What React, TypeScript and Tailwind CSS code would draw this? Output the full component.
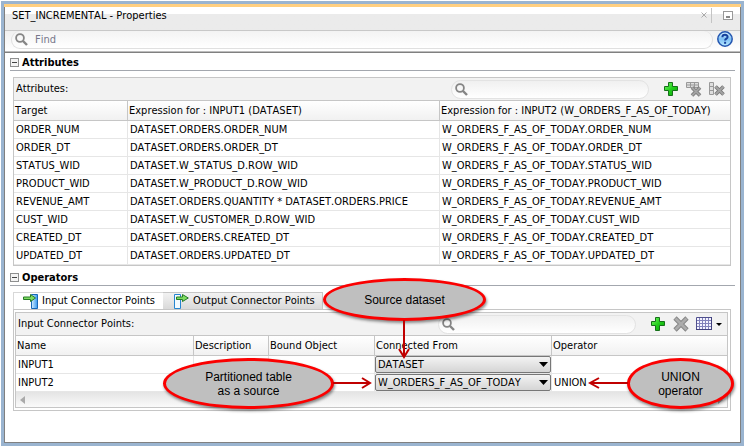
import type { ReactNode } from "react";

const attributes = [
  ["ORDER_NUM", "DATASET.ORDERS.ORDER_NUM", "W_ORDERS_F_AS_OF_TODAY.ORDER_NUM"],
  ["ORDER_DT", "DATASET.ORDERS.ORDER_DT", "W_ORDERS_F_AS_OF_TODAY.ORDER_DT"],
  ["STATUS_WID", "DATASET.W_STATUS_D.ROW_WID", "W_ORDERS_F_AS_OF_TODAY.STATUS_WID"],
  ["PRODUCT_WID", "DATASET.W_PRODUCT_D.ROW_WID", "W_ORDERS_F_AS_OF_TODAY.PRODUCT_WID"],
  ["REVENUE_AMT", "DATASET.ORDERS.QUANTITY * DATASET.ORDERS.PRICE", "W_ORDERS_F_AS_OF_TODAY.REVENUE_AMT"],
  ["CUST_WID", "DATASET.W_CUSTOMER_D.ROW_WID", "W_ORDERS_F_AS_OF_TODAY.CUST_WID"],
  ["CREATED_DT", "DATASET.ORDERS.CREATED_DT", "W_ORDERS_F_AS_OF_TODAY.CREATED_DT"],
  ["UPDATED_DT", "DATASET.ORDERS.UPDATED_DT", "W_ORDERS_F_AS_OF_TODAY.UPDATED_DT"],
];

const operators = [
  { name: "INPUT1", from: "DATASET", operator: "" },
  { name: "INPUT2", from: "W_ORDERS_F_AS_OF_TODAY", operator: "UNION" },
];

function SearchIcon() {
  return (
    <svg width="13" height="13" viewBox="0 0 13 13" fill="none" stroke="#858585" className="shrink-0">
      <circle cx="5" cy="5" r="3.9" strokeWidth="1.8" />
      <path d="M8 8l4 4" strokeWidth="2.4" />
    </svg>
  );
}

function PlusIcon() {
  return (
    <svg width="16" height="16" viewBox="0 0 16 16">
      <defs>
        <linearGradient id="plus" x1="0" y1="0" x2="1" y2="1">
          <stop offset="0" stopColor="#7dfa6c" />
          <stop offset="0.5" stopColor="#22cf1b" />
          <stop offset="1" stopColor="#0aa00a" />
        </linearGradient>
      </defs>
      <path d="M5.5 1.500h4v4h5v4h-5v5h-4v-5h-4v-4h4z" fill="url(#plus)" stroke="#16701a" strokeLinejoin="round" />
    </svg>
  );
}

function Cross({ d }: { d: string }) {
  return (
    <>
      <path d={d} stroke="#777" strokeWidth="3.6" />
      <path d={d} stroke="#a3a3a3" strokeWidth="1.8" />
    </>
  );
}

function DeleteColumnIcon() {
  return (
    <svg width="16" height="16" viewBox="0 0 16 16" fill="none">
      <path d="M.5 1.5h12v5H.5zM.5 4h12M4.5 1.500v5M8.500 1.500v5" fill="#dedede" stroke="#999" />
      <Cross d="M6 6.500l8 8M14 6.500l-8 8" />
    </svg>
  );
}

function DeleteRowIcon() {
  return (
    <svg width="16" height="16" viewBox="0 0 16 16" fill="none">
      <path d="M.5 1.500h4v12h-4zM.5 5.500h4M.5 9.500h4" fill="#dedede" stroke="#999" />
      <Cross d="M6.500 5.500l8 8M14.500 5.500l-8 8" />
    </svg>
  );
}

function DeleteIcon() {
  return (
    <svg width="16" height="16" viewBox="0 0 16 16" fill="none">
      <path d="M2 2l12 12M14 2L2 14" stroke="#858585" strokeWidth="4.6" />
      <path d="M2.5 2.5l11 11M13.5 2.5l-11 11" stroke="#acacac" strokeWidth="2.8" />
    </svg>
  );
}

function GridIcon() {
  return (
    <svg width="16" height="14" viewBox="0 0 16 14" fill="none">
      <path d="M.5.5h15v12H.5z" fill="#f4f4ff" stroke="#50508e" />
      <path d="M1 3.5h14M1 6.5h14M1 9.5h14M3.5 1v11M6.5 1v11M9.5 1v11M12.5 1v11" stroke="#8282bb" />
      <path d="M0 12.5h16M15.5 0v13" stroke="#40407c" />
    </svg>
  );
}

function ConnectorIcon({ output = false }: { output?: boolean }) {
  return (
    <svg width="16" height="16" viewBox="0 0 16 16" className="shrink-0">
      <defs>
        <linearGradient id="port" x1="0" x2="1">
          <stop offset="0" stopColor="#d5efff" />
          <stop offset="1" stopColor="#3597ee" />
        </linearGradient>
      </defs>
      {output ? (
        <path d="M1.5 1.5h6v14h-6z" fill="#f3faff" stroke="#2585d0" />
      ) : (
        <path d="M8.500 1.500h6v14h-6z" fill="url(#port)" stroke="#1769b8" />
      )}
      <path
        d={output ? "M3.5 4h6V1.500L15.300 5 9.500 8.500V6.500h-6z" : "M.5 4h7V1.500l5 3.500-5 3.500V6.500h-7z"}
        fill="#7fdc60"
        stroke="#267a26"
        strokeLinejoin="round"
      />
    </svg>
  );
}

function HelpIcon() {
  return (
    <svg width="16" height="16" viewBox="0 0 16 16">
      <defs>
        <linearGradient id="help" x1="0" y1="0" x2="0" y2="1">
          <stop offset="0" stopColor="#e0f4ff" />
          <stop offset="0.5" stopColor="#7fc0f5" />
          <stop offset="1" stopColor="#b9eaff" />
        </linearGradient>
      </defs>
      <circle cx="8" cy="8" r="7.2" fill="url(#help)" stroke="#2456b0" strokeWidth="1.5" />
      <path d="M5.4 6.200c0-3.200 5.200-3 5.200-.3 0 1.700-2.500 1.800-2.500 3.600" fill="none" stroke="#16409c" strokeWidth="2" />
      <path d="M7.100 10.800h2v2h-2z" fill="#16409c" />
    </svg>
  );
}

function SearchBox({ label }: { label: string }) {
  return (
    <label className="flex h-[19px] w-[198px] items-center rounded-full border border-[#e3e3e3] bg-gradient-to-b from-[#f0f0f0] to-white pl-[3px]">
      <SearchIcon />
      <input aria-label={label} className="min-w-0 flex-1 bg-transparent px-2 outline-none" />
    </label>
  );
}

function SectionTitle({ children }: { children: ReactNode }) {
  return (
    <h2 className="flex h-4 items-center gap-[3px] border-b border-[#a3a7ae] text-[11px] font-bold">
      <button aria-label="Collapse section" className="flex h-[9px] w-[9px] items-center justify-center border border-[#8e8f8f] bg-[#f4f4f4]">
        <span className="h-px w-[5px] bg-[#444]" />
      </button>
      {children}
    </h2>
  );
}

function HeaderCell({ children, width = "" }: { children: ReactNode; width?: string }) {
  return (
    <th className={`${width} h-5 whitespace-nowrap border-b border-l border-[#c6c6c6] bg-gradient-to-b from-white to-[#f1f1f1] p-0 pl-px text-left font-normal first:border-l-0`}>
      {children}
    </th>
  );
}

function Callout({ className, children }: { className: string; children: ReactNode }) {
  return (
    <div
      className={`${className} absolute flex items-center justify-center rounded-[50%] border-[3px] border-[#fb0000] bg-[#bfbfbf] text-center font-['Liberation_Sans',Arial,sans-serif] text-[12px] leading-[14px] shadow-[1px_2px_3px_rgba(0,0,0,0.45)]`}
    >
      {children}
    </div>
  );
}

function Arrow({ className, width, height, d }: { className: string; width: number; height: number; d: string }) {
  return (
    <svg className={`${className} absolute`} width={width} height={height} fill="none" stroke="#c00000" strokeWidth="2">
      <path d={d} />
    </svg>
  );
}

export default function App() {
  return (
    <div className="relative border-l border-t border-white font-['DejaVu_Sans_Condensed','DejaVu_Sans',sans-serif] text-[11px] leading-[14px] text-black [font-kerning:none]">
      <div className="border-[3px] border-[#9ab4d0]">
        <div className="h-[3px] bg-[#ffcf80]" />
        <div className="border-b border-l border-r border-[#808080] bg-white">
          <header className="bg-gradient-to-b from-white from-[7px] to-[#ebebeb] to-[7px]">
            <div className="flex h-6 items-center border-b border-[#c8c8c8] pl-[7px] pr-[7px] pb-[7px]">
              <h1 className="flex-1 pt-px">SET_INCREMENTAL - Properties</h1>
              <button aria-label="Close" className="px-1">
                <svg width="6" height="6" viewBox="0 0 6 6" stroke="#aaa"><path d="M.5.5l5 5M5.5.5l-5 5" /></svg>
              </button>
              <span className="h-[15px] w-px bg-[#c4c4c4]" />
              <button aria-label="Minimize" className="ml-[11px] flex h-[9px] w-[10px] items-end justify-center border border-[#999] bg-white pb-px">
                <span className="h-[2px] w-1 bg-[#888]" />
              </button>
            </div>
            <div className="flex h-[21px] items-start justify-between border-b border-[#bdbdbd] bg-gradient-to-b from-[#f0f0f0] to-white pl-[6px] pr-[7px]">
              <label className="flex h-[18px] flex-1 items-center rounded-full border border-t-0 border-[#e0e0e0] bg-gradient-to-b from-[#f3f3f3] to-white pl-[3px]">
                <SearchIcon />
                <input aria-label="Find" placeholder="Find" className="min-w-0 flex-1 bg-transparent px-[7px] outline-none placeholder:text-[#77778a]" />
              </label>
              <button aria-label="Help" className="ml-1"><HelpIcon /></button>
            </div>
            <div className="h-px bg-[#808080]" />
          </header>

          <main className="px-[5px] pb-[31px] pt-[2px]">
            <SectionTitle>Attributes</SectionTitle>
            <section className="ml-[3px] mr-1 mt-[6px] border border-[#c6c6c6]">
              <div className="flex h-[22px] items-center bg-[#f2f2f2] pl-[2px] pr-[5px]">
                <span className="flex-1">Attributes:</span>
                <SearchBox label="Search attributes" />
                <div className="ml-[14px] flex gap-[7px]">
                  <button aria-label="Add attribute"><PlusIcon /></button>
                  <button aria-label="Delete column"><DeleteColumnIcon /></button>
                  <button aria-label="Delete row"><DeleteRowIcon /></button>
                </div>
              </div>
              <table className="w-full table-fixed border-separate border-spacing-0 border-t border-[#c6c6c6]">
                <thead>
                  <tr>
                    <HeaderCell width="w-[113px]">Target</HeaderCell>
                    <HeaderCell width="w-[312px]">Expression for : INPUT1 (DATASET)</HeaderCell>
                    <HeaderCell>Expression for : INPUT2 (W_ORDERS_F_AS_OF_TODAY)</HeaderCell>
                  </tr>
                </thead>
                <tbody>
                  {attributes.map((row) => (
                    <tr key={row[0]}>
                      {row.map((cell) => (
                        <td key={cell} className="h-[18px] whitespace-nowrap border-b border-l border-[#e6e6e6] p-0 pl-[2px] first:border-l-0">{cell}</td>
                      ))}
                    </tr>
                  ))}
                </tbody>
              </table>
            </section>

            <div className="mt-1">
              <SectionTitle>Operators</SectionTitle>
            </div>
            <section className="ml-[3px] mr-1 mt-[6px]">
              <div role="tablist" className="flex h-[17px]">
                <button role="tab" aria-selected="true" className="flex w-[150px] items-center gap-[3px] whitespace-nowrap border-l border-t border-[#d8d8d8] bg-white pl-[9px]">
                  <ConnectorIcon />Input Connector Points
                </button>
                <button role="tab" aria-selected="false" className="flex w-[160px] items-center gap-1 whitespace-nowrap border-r border-t border-[#c6c6c6] bg-gradient-to-b from-[#f2f2f2] to-[#d9d9d9] pl-[10px]">
                  <ConnectorIcon output />Output Connector Points
                </button>
              </div>
              <div className="border border-[#c6c6c6] pb-[2px] pl-px pr-[2px] pt-[2px]">
                <div className="border border-[#c6c6c6]">
                  <div className="flex h-[22px] items-center bg-[#f2f2f2] pl-[2px] pr-[5px]">
                    <span className="flex-1">Input Connector Points:</span>
                    <SearchBox label="Search connector points" />
                    <div className="ml-[14px] flex items-center gap-[7px]">
                      <button aria-label="Add connector point"><PlusIcon /></button>
                      <button aria-label="Delete connector point"><DeleteIcon /></button>
                      <button aria-label="Choose columns" className="flex items-center gap-1">
                        <GridIcon />
                        <svg width="6" height="3"><path d="M0 0h6L3 3z" /></svg>
                      </button>
                    </div>
                  </div>
                  <table className="w-full table-fixed border-separate border-spacing-0 border-t border-[#c6c6c6]">
                    <thead>
                      <tr>
                        <HeaderCell width="w-[177px]">Name</HeaderCell>
                        <HeaderCell width="w-[75px]">Description</HeaderCell>
                        <HeaderCell width="w-[106px]">Bound Object</HeaderCell>
                        <HeaderCell width="w-[177px]">Connected From</HeaderCell>
                        <HeaderCell>Operator</HeaderCell>
                      </tr>
                    </thead>
                    <tbody>
                      {operators.map((row) => (
                        <tr key={row.name} className="[&>td]:h-[18px] [&>td]:border-b [&>td]:border-[#e6e6e6] [&>td]:p-0">
                          <td><span className="pl-[2px]">{row.name}</span></td>
                          <td className="border-l" />
                          <td className="border-l" />
                          <td className="border-l">
                            <div className="relative h-[17px]">
                              <select aria-label={`${row.name} connected from`} className="block h-full w-full appearance-none rounded-[2px] border border-[#777] bg-gradient-to-b from-[#f3f3f3] to-[#d5d5d5] pl-[2px] pr-4">
                                <option>{row.from}</option>
                              </select>
                              <svg className="pointer-events-none absolute right-[3px] top-[6px]" width="9" height="5"><path d="M0 0h9L4.500 5z" /></svg>
                            </div>
                          </td>
                          <td className="border-l"><span className="pl-[2px]">{row.operator}</span></td>
                        </tr>
                      ))}
                    </tbody>
                  </table>
                  <div className="flex h-[15px] items-center justify-between bg-gradient-to-b from-[#e4e4e4] to-[#fafafa] px-1">
                    <svg width="5" height="8" fill="#aaa"><path d="M5 0v8L0 4z" /></svg>
                    <svg width="5" height="8" fill="#aaa"><path d="M0 0v8l5-4z" /></svg>
                  </div>
                </div>
              </div>
            </section>
          </main>
        </div>
      </div>

      <Callout className="left-[322px] top-[277px] h-[43px] w-[163px]">Source dataset</Callout>
      <Callout className="left-[162px] top-[357px] h-[51px] w-[171px]">Partitioned table<br />as a source</Callout>
      <Callout className="left-[626px] top-[357px] h-[51px] w-[107px]">UNION<br />operator</Callout>
      <Arrow className="left-[397px] top-[319px]" width={12} height={40} d="M6 0v37M1 29l5 8 5-8" />
      <Arrow className="left-[332px] top-[376px]" width={40} height={12} d="M0 6h37M29 1l8 5-8 5" />
      <Arrow className="left-[587px] top-[376px]" width={40} height={12} d="M40 6H2M11 1L2 6l9 5" />
    </div>
  );
}
